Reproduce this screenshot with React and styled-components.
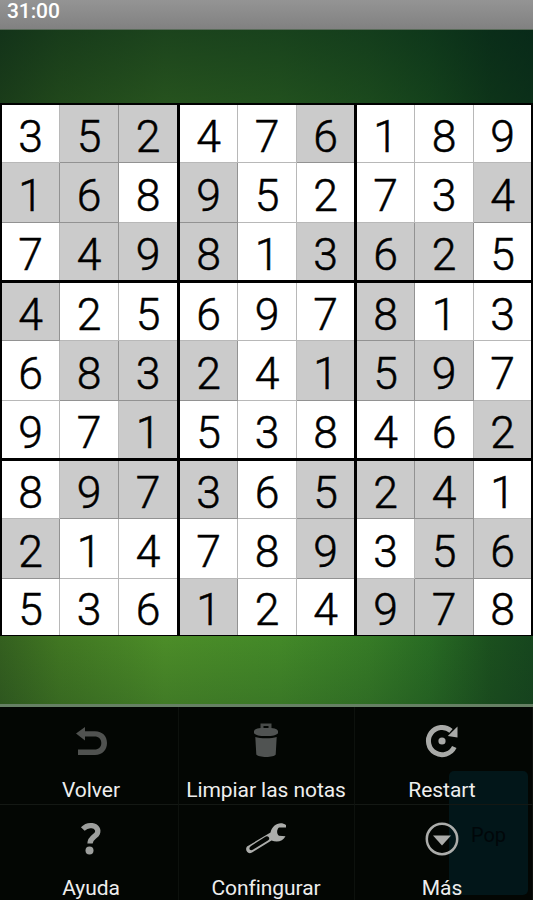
import React from "react";
import styled, { createGlobalStyle, css } from "styled-components";

const board = [
  "352476189",
  "168952734",
  "749813625",
  "425697813",
  "683241597",
  "971538462",
  "897365241",
  "214789356",
  "536124978",
];

// 1 = number given at the start of the game
const given = [
  "011001000",
  "110100001",
  "011101110",
  "100000100",
  "011101110",
  "001000001",
  "011101110",
  "100001011",
  "000100110",
];

const UndoIcon = () => (
  <svg width="36" height="36" viewBox="0 0 36 36">
    <path d="M3 10.500L12 4V8.300H22C29.500 8.300 34 13.300 34 20C34 26.600 29.500 32 22 32H5V26.500H21.500C25.700 26.500 28.300 24 28.300 20C28.300 16.200 25.700 13.600 21.500 13.600H12V17.500Z" fill="#505250" />
  </svg>
);

const TrashIcon = () => (
  <svg width="36" height="36" viewBox="0 0 36 36">
    <path d="M12.500 5V0.500H23.500V5H20.500V3H15.500V5Z" fill="#484b49" />
    <path d="M6 8C7 5.500 10 5 18 5S29 5.500 30 8V10.200C28 12.200 25 13 18 13S8 12.200 6 10.200Z" fill="#505352" />
    <path d="M7.300 14C12 15.800 24 15.800 28.700 14L27.700 31.500C26.500 34.800 10 34.800 8.300 31.500Z" fill="#505352" />
  </svg>
);

const RestartIcon = () => (
  <svg width="36" height="36" viewBox="0 0 36 36">
    <path d="M27 7.800A13.600 13.600 0 1 0 30.300 24" fill="none" stroke="#a9aaa8" strokeWidth="5" />
    <path d="M33.500 3.500V14.500L23.800 13Z" fill="#a9aaa8" />
    <circle cx="18" cy="18" r="3.600" fill="#a9aaa8" />
  </svg>
);

const HelpIcon = () => (
  <svg width="36" height="36" viewBox="0 0 36 36">
    <path d="M9.800 8C12.500 5.300 16 4.200 19 4.700C23.800 5.400 25.800 9 24.300 12.400C22.900 15.600 17 16.600 17 22.600" fill="none" stroke="#9d9f9d" strokeWidth="5.300" />
    <circle cx="16.500" cy="29.600" r="4" fill="#9d9f9d" />
  </svg>
);

const WrenchIcon = () => (
  <svg width="42" height="36" viewBox="0 0 42 36">
    <path
      fillRule="evenodd"
      d="M41 6.500H34C31.500 8.500 31.500 13 34 14.800L40.500 15.200C38 20.500 32 21.500 26.500 19.500L7 31.500C2.500 34 -0.500 28.500 2 25.500L25.500 11.500C27 4 35 -0.500 41 4ZM24 16.500C23 15.200 21.700 14.800 20 16L6 25C2.800 27.500 5 30.500 8.200 28.500L22.500 19.800C24 18.800 24.600 17.700 24 16.500Z"
      fill="#acadab"
    />
  </svg>
);

const MoreIcon = () => (
  <svg width="36" height="36" viewBox="0 0 36 36">
    <circle cx="18" cy="18" r="15.200" fill="none" stroke="#acadab" strokeWidth="2.500" />
    <path d="M9 14.500H27L18 24.500Z" fill="#acadab" />
  </svg>
);

const items = [
  { label: "Volver", icon: <UndoIcon /> },
  { label: "Limpiar las notas", icon: <TrashIcon /> },
  { label: "Restart", icon: <RestartIcon /> },
  { label: "Ayuda", icon: <HelpIcon /> },
  { label: "Confingurar", icon: <WrenchIcon /> },
  { label: "Más", icon: <MoreIcon /> },
];

const three = [0, 1, 2];

const Box = ({ row, col }) => (
  <BoxGrid>
    {three.map((r) =>
      three.map((c) => {
        const y = row * 3 + r;
        const x = col * 3 + c;
        return (
          <Cell key={`${y}${x}`} $given={given[y][x] === "1"} $right={c < 2} $bottom={r < 2}>
            {board[y][x]}
          </Cell>
        );
      })
    )}
  </BoxGrid>
);

const App = () => {
  return (
    <Screen>
      <GlobalStyle />
      <StatusBar>31:00</StatusBar>
      <Board>
        {three.map((row) => three.map((col) => <Box key={`${row}${col}`} row={row} col={col} />))}
      </Board>
      <Menu>
        <PopButton>Pop</PopButton>
        {items.map(({ label, icon }) => (
          <MenuItem key={label}>
            {icon}
            <span>{label}</span>
          </MenuItem>
        ))}
      </Menu>
    </Screen>
  );
};

export default App;

const GlobalStyle = createGlobalStyle`
  * {
    box-sizing: border-box;
  }
  body {
    margin: 0;
    background: #000;
    font-family: Roboto, sans-serif;
  }
`;

const Screen = styled.div`
  display: flex;
  flex-direction: column;
  width: 533px;
  height: 900px;
  overflow: hidden;
  background:
    linear-gradient(rgba(0, 26, 22, 0.64) 30px, rgba(0, 24, 20, 0.5) 103px, transparent 636px, rgba(20, 50, 30, 0.2) 704px),
    linear-gradient(90deg, #34601f 0, #417722 60px, #4c8d28 165px, #438928 280px, #367b26 370px, #286b23 430px, #1b501e 490px, #16461e 533px);
`;

const StatusBar = styled.div`
  flex: none;
  height: 30px;
  padding-left: 7px;
  border-bottom: 1px solid #596b59;
  background: linear-gradient(#949494, #818181);
  color: #fff;
  font-size: 21px;
  font-weight: 500;
  letter-spacing: -0.1px;
  line-height: 23px;
`;

const Board = styled.div`
  flex: none;
  display: grid;
  grid-template-columns: 175px 174px 174px;
  grid-template-rows: 175px 175px 174px;
  gap: 3px;
  width: 533px;
  height: 533px;
  margin-top: 73px;
  padding: 2px 2px 1px;
  background: #000;
`;

const BoxGrid = styled.div`
  display: grid;
  grid-template-columns: 58px 59px 1fr;
  grid-template-rows: 58px 60px 1fr;
`;

const Cell = styled.div`
  display: flex;
  align-items: center;
  justify-content: center;
  padding-top: 6px;
  color: #000;
  background: ${({ $given }) => ($given ? "#cbcbcb" : "#fff")};
  font-size: 44.5px;
  font-weight: 300;
  -webkit-text-stroke: 0.5px #000;
  line-height: 50px;

  ${({ $right }) =>
    $right &&
    css`
      border-right: 1px solid rgba(0, 0, 0, 0.28);
    `}
  ${({ $bottom }) =>
    $bottom &&
    css`
      border-bottom: 1px solid rgba(0, 0, 0, 0.28);
    `}
`;

const Menu = styled.div`
  position: relative;
  flex: none;
  display: grid;
  grid-template-columns: 179px 176px 178px;
  grid-template-rows: 98px 98px;
  height: 196px;
  margin-top: 68px;
  border-top: 3px solid #668064;
  background: #030603;
`;

const MenuItem = styled.div`
  position: relative;
  display: flex;
  flex-direction: column;
  align-items: center;
  padding-top: 16px;
  border-right: 1px solid #0d110d;
  border-bottom: 1px solid #141814;
  color: #eee;
  font-size: 21px;
  letter-spacing: -0.06px;

  &:nth-child(3n + 2) {
    padding-left: 4px;
  }
  &:nth-child(3n) {
    padding-right: 1px;
  }
  &:nth-child(3n + 4) {
    padding-right: 3px;
  }

  span {
    margin-top: 19px;
    line-height: 25px;
    white-space: nowrap;
  }
`;

const PopButton = styled.div`
  position: absolute;
  top: 64px;
  left: 449px;
  width: 79px;
  height: 124px;
  padding-top: 50px;
  border-radius: 5px;
  background: #021619;
  color: #010709;
  font-size: 20px;
  line-height: 28px;
  text-align: center;
`;
